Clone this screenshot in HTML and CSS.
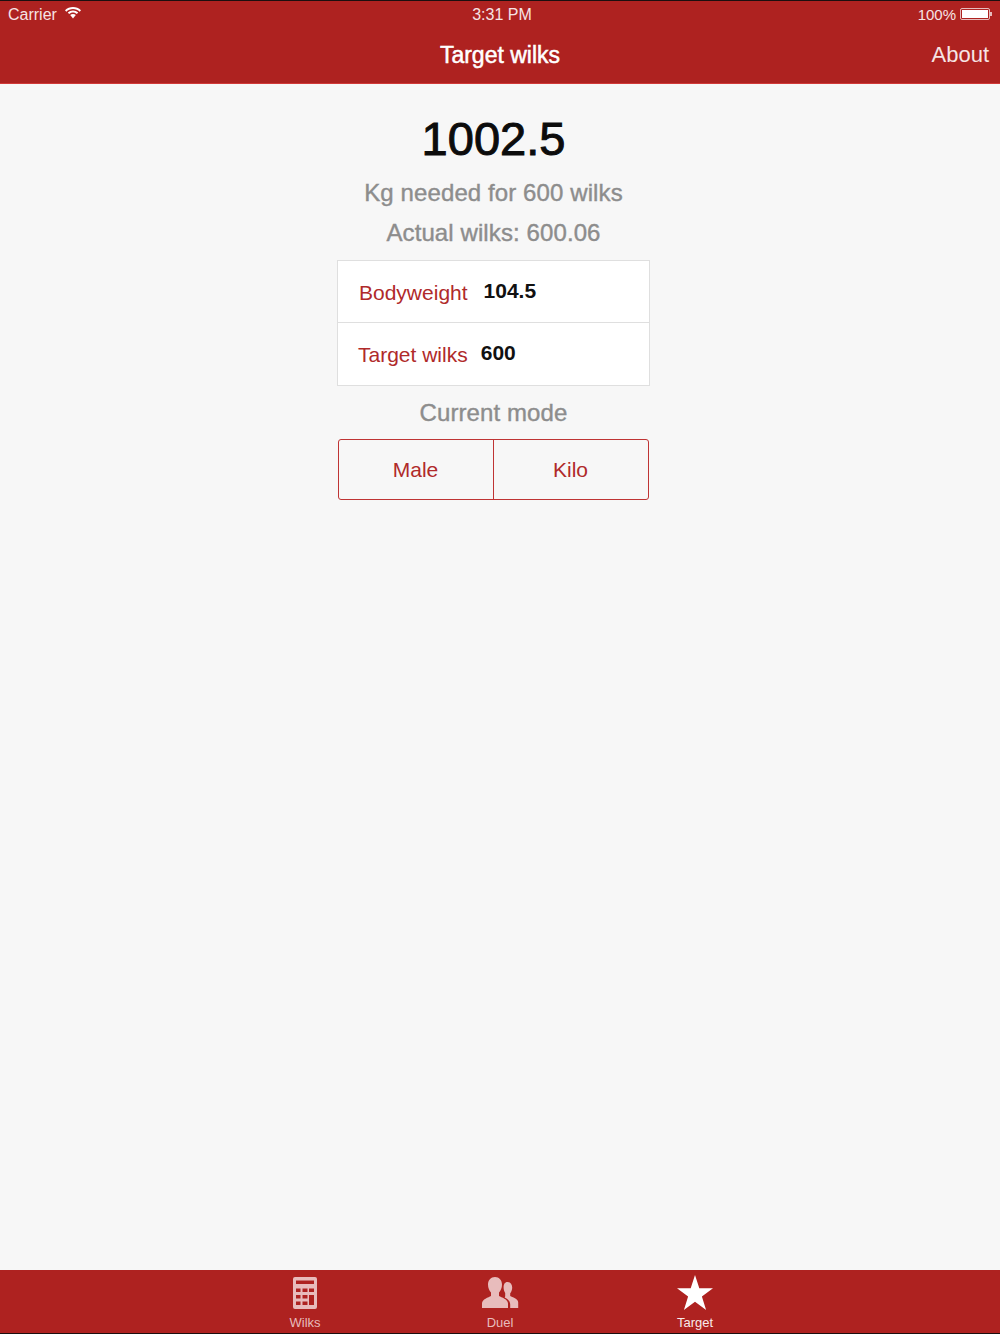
FILE: index.html
```html
<!DOCTYPE html>
<html lang="en">
<head>
    <meta charset="UTF-8">
    <meta name="viewport" content="width=device-width, initial-scale=1.0">
    <title>Target wilks</title>
    <link rel="stylesheet" href="styles.css">
</head>
<body>
    <div class="app">
        <div class="header">
            <div class="status-bar">
                <div class="status-left">
                    <span>Carrier</span>
                    <svg class="wifi" viewBox="0 0 16 12" width="16" height="12">
                        <path d="M8 0C5 0 2.200 1.200 0 3.200l1.300 1.500C3.100 3 5.400 2 8 2s4.900 1 6.700 2.700L16 3.200C13.800 1.200 11 0 8 0z" fill="#fff"/>
                        <path d="M8 3.500c-1.900 0-3.800.8-5.200 2.100l1.300 1.500C5.200 6.100 6.500 5.500 8 5.500s2.800.6 3.900 1.600l1.300-1.500C11.800 4.300 9.900 3.500 8 3.500z" fill="#fff"/>
                        <path d="M8 7c-1.100 0-2.100.4-2.800 1.100L8 11.500l2.800-3.400C10.100 7.400 9.100 7 8 7z" fill="#fff"/>
                    </svg>
                </div>
                <div class="status-time">3:31 PM</div>
                <div class="status-right">
                    <span class="battery-level">100%</span>
                    <span class="battery"><span class="battery-fill"></span></span>
                    <span class="battery-tip"></span>
                </div>
            </div>
            <div class="nav-bar">
                <h1>Target wilks</h1>
                <a class="nav-link">About</a>
            </div>
        </div>

        <div class="content">
            <div class="result">1002.5</div>
            <div class="caption caption-first">Kg needed for 600 wilks</div>
            <div class="caption caption-second">Actual wilks: 600.06</div>

            <div class="form">
                <div class="form-row">
                    <span class="form-label">Bodyweight</span>
                    <span class="form-value">104.5</span>
                </div>
                <div class="form-row">
                    <span class="form-label">Target wilks</span>
                    <span class="form-value value-target">600</span>
                </div>
            </div>

            <div class="caption caption-mode">Current mode</div>

            <div class="segments">
                <div class="segment">Male</div>
                <div class="segment">Kilo</div>
            </div>
        </div>

        <div class="tabs">
            <div class="tab">
                <svg viewBox="0 0 24 32" width="24" height="32">
                    <path fill-rule="evenodd" d="M2 0h20a2 2 0 0 1 2 2v28a2 2 0 0 1-2 2H2a2 2 0 0 1-2-2V2a2 2 0 0 1 2-2zM3 3.500V7h18V3.500zM3 11.500V15h4.500v-3.500zM9.500 11.500V15h5v-3.500zM16 11.500V15h5v-3.500zM3 18v3.500h4.500V18zM9.500 18v3.500h5V18zM16 18v10h5V18zM3 24.500V28h4.500v-3.500zM9.500 24.500V28h5v-3.500z"/>
                </svg>
                <span>Wilks</span>
            </div>
            <div class="tab">
                <svg viewBox="0 0 38 32" width="38" height="32">
                    <path d="M14 0c4.200 0 7 3.200 7 7.500 0 3.300-1.300 6.200-3 8V19c2.500 1.500 9 3 9 7.500V31H1v-4.500C1 22 7.500 20.500 10 19v-3.500c-1.700-1.800-3-4.700-3-8C7 3.200 9.800 0 14 0z"/>
                    <path d="M26.500 5c2.800 0 4.700 2.400 4.700 5.500 0 2.400-.9 4.500-2 5.700V19c2 1 8 2.500 8 6.500V31h-8v-3.500c0-3.500-2.500-5.500-5.500-7 .3-.4.500-.9.500-1.500v-3c-1-1.500-1.600-3.500-1.600-5.500C22.600 7.400 23.700 5 26.500 5z"/>
                </svg>
                <span>Duel</span>
            </div>
            <div class="tab tab-active">
                <svg viewBox="0 0 36 35" width="36" height="35">
                    <path d="M18 0l4.300 13.300H36l-11.100 8.200L29.100 35 18 26.700 6.900 35l4.200-13.500L0 13.300h13.700z"/>
                </svg>
                <span>Target</span>
            </div>
        </div>
    </div>
</body>
</html>
```

FILE: styles.css
```css
* {
    margin: 0;
    padding: 0;
    box-sizing: border-box;
    font-family: 'Liberation Sans', Arial, sans-serif;
}

body {
    background: #f7f7f7;
}

.app {
    height: 1334px;
    display: flex;
    flex-direction: column;
}

/* top bar */
.header {
    height: 84px;
    background: #ae2220;
    border-top: 1px solid #1c0f0f;
    border-bottom: 1px solid #d13a38;
    color: white;
    flex-shrink: 0;
}

.status-bar {
    height: 26px;
    padding: 2px 8px 0;
    display: grid;
    grid-template-columns: 1fr auto 1fr;
    align-items: center;
    font-size: 16px;
    color: #f6e4e4;
}

.status-left {
    display: flex;
    align-items: center;
    gap: 8px;
}

.wifi {
    margin-top: -4px;
}

.status-time {
    font-size: 16px;
    padding-left: 4px;
}

.status-right {
    display: flex;
    align-items: center;
    justify-content: flex-end;
}

.battery-level {
    font-size: 15px;
    margin-top: -2px;
}

.battery {
    width: 30px;
    height: 12px;
    margin: -2px 0 0 4px;
    padding: 1px;
    border: 1px solid #e6bcbc;
    border-radius: 2px;
}

.battery-fill {
    display: block;
    height: 100%;
    background: white;
}

.battery-tip {
    width: 2px;
    height: 4px;
    margin-top: -2px;
    background: #e6bcbc;
}

.nav-bar {
    height: 56px;
    padding: 0 11px 0 0;
    display: flex;
    align-items: center;
    justify-content: flex-end;
    position: relative;
}

.nav-bar h1 {
    position: absolute;
    left: 0;
    right: 0;
    top: 15px;
    text-align: center;
    font-size: 23px;
    font-weight: normal;
    -webkit-text-stroke: 0.5px white;
}

.nav-link {
    font-size: 22px;
    color: #f6e4e4;
}

/* main area */
.content {
    flex: 1;
    width: 313px;
    margin-left: 337px;
    display: flex;
    flex-direction: column;
    align-items: center;
}

.result {
    font-size: 47px;
    line-height: 54px;
    margin-top: 28px;
    color: #0c0c0c;
    -webkit-text-stroke: 1px #0c0c0c;
}

.caption {
    font-size: 24px;
    letter-spacing: 0.1px;
    line-height: 26px;
    color: #8d8d8d;
    -webkit-text-stroke: 0.4px #8d8d8d;
}

.caption-first {
    margin-top: 14px;
}

.caption-second {
    margin-top: 14px;
}

.form {
    width: 100%;
    margin-top: 14px;
    background: white;
    border: 1px solid #dfdfdf;
}

.form-row {
    height: 61px;
    display: flex;
    align-items: center;
    padding-left: 21px;
}

.form-row + .form-row {
    height: 63px;
    border-top: 1px solid #dfdfdf;
    padding-left: 20px;
}

.form-label {
    font-size: 21px;
    color: #b02a2a;
    margin-top: 3px;
}

.form-row + .form-row .form-label {
    margin-top: 2px;
}

.form-value {
    font-size: 21px;
    font-weight: bold;
    color: #111;
    margin-left: 16px;
    margin-top: -1px;
}

.value-target {
    margin-left: 13px;
    margin-top: -2px;
}

.caption-mode {
    margin-top: 14px;
}

.segments {
    width: 311px;
    height: 61px;
    margin-top: 13px;
    margin-left: -1px;
    display: flex;
    border: 1px solid #bf3434;
    border-radius: 3px;
}

.segment {
    flex: 1;
    display: flex;
    align-items: center;
    justify-content: center;
    font-size: 21px;
    color: #b02a2a;
}

.segment + .segment {
    border-left: 1px solid #bf3434;
}

/* bottom tabs */
.tabs {
    height: 64px;
    flex-shrink: 0;
    background: #ae2220;
    display: flex;
    justify-content: center;
    gap: 115px;
    padding-top: 7px;
    border-bottom: 1px solid #1c0f0f;
}

.tab {
    width: 80px;
    display: flex;
    flex-direction: column;
    align-items: center;
    font-size: 13px;
    color: #e8bcbc;
}

.tab svg {
    fill: #e8bcbc;
    margin-bottom: 6px;
}

.tab-active {
    color: #f8eaea;
}

.tab-active svg {
    fill: white;
    margin-top: -2px;
    margin-bottom: 5px;
}
```
